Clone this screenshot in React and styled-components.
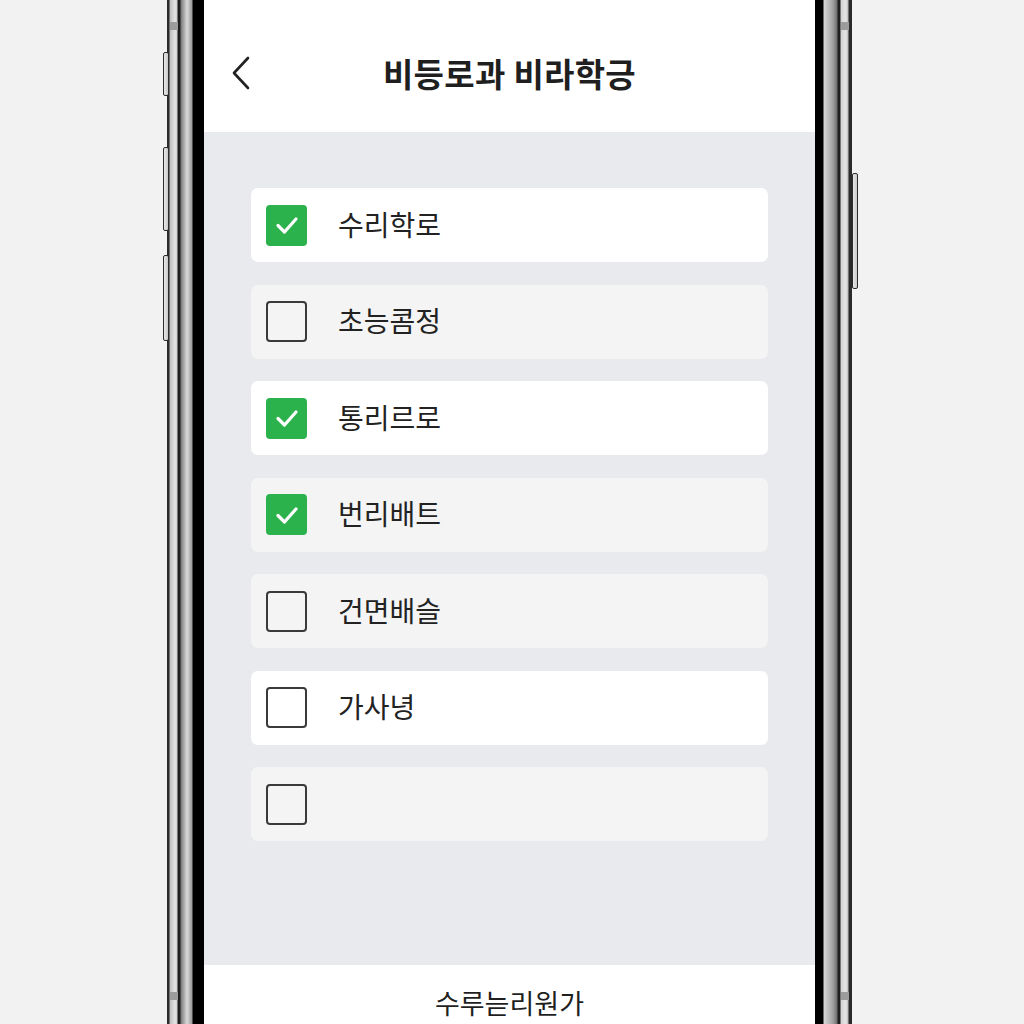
import React from "react";
import styled, { createGlobalStyle } from "styled-components";

const GlobalStyle = createGlobalStyle`
  html, body {
    margin: 0;
    padding: 0;
    background: #f2f2f2;
  }
  body {
    font-family: "Noto Sans CJK KR", "Noto Sans", sans-serif;
  }
`;

const Stage = styled.div`
  width: 1024px;
  height: 1024px;
  overflow: hidden;
  background: #f2f2f2;
`;

const Phone = styled.div`
  position: relative;
  display: flex;
  width: 685px;
  height: 1024px;
  margin-left: 167px;
`;

const LeftRail = styled.div`
  width: 37px;
  height: 100%;
  background: linear-gradient(
    90deg,
    #2a2a2a 0px,
    #2a2a2a 2px,
    #bdbdbd 3px,
    #e4e4e4 8px,
    #cfcfcf 10px,
    #1e1e1e 11px,
    #1e1e1e 13px,
    #7a7a7a 14px,
    #d9d9d9 20px,
    #9a9a9a 25px,
    #000 26px,
    #000 37px
  );
`;

const RightRail = styled.div`
  width: 37px;
  height: 100%;
  background: linear-gradient(
    90deg,
    #000 0px,
    #000 8px,
    #d6d6d6 9px,
    #a0a0a0 18px,
    #6e6e6e 22px,
    #1e1e1e 23px,
    #1e1e1e 25px,
    #d2d2d2 26px,
    #e6e6e6 31px,
    #bcbcbc 33px,
    #2a2a2a 34px,
    #2a2a2a 37px
  );
`;

const Antenna = styled.div`
  position: absolute;
  top: ${(p) => p.$top}px;
  ${(p) => (p.$side === "left" ? "left: 3px;" : "right: 3px;")}
  width: 8px;
  height: 8px;
  background: #9c9c9c;
`;

const SideButton = styled.div`
  position: absolute;
  top: ${(p) => p.$top}px;
  height: ${(p) => p.$height}px;
  ${(p) => (p.$side === "left" ? "left: -4px;" : "right: -6px;")}
  width: 6px;
  border: 1.5px solid #2c2c2c;
  border-radius: 2px;
  background: linear-gradient(90deg, #e8e8e8, #c9c9c9);
  box-sizing: border-box;
`;

const Screen = styled.div`
  flex: 1;
  display: flex;
  flex-direction: column;
  background: #e8eaed;
`;

const Header = styled.header`
  height: 132px;
  flex-shrink: 0;
  background: #ffffff;
  display: grid;
  grid-template-columns: 60px 1fr 60px;
  align-items: center;
  padding-top: 14px;
  box-sizing: border-box;
`;

const BackButton = styled.button`
  border: 0;
  background: none;
  padding: 0 0 0 26px;
  display: flex;
  align-items: center;
  cursor: pointer;
`;

const Title = styled.h1`
  margin: 0;
  text-align: center;
  font-size: 33px;
  font-weight: 600;
  color: #1f1f1f;
  letter-spacing: 0.3px;
`;

const Content = styled.main`
  flex: 1;
  padding: 56px 47px 0;
  display: flex;
  flex-direction: column;
  gap: 22.5px;
`;

const Card = styled.label`
  height: 74px;
  flex-shrink: 0;
  display: flex;
  align-items: center;
  gap: 31px;
  padding-left: 15px;
  border-radius: 7px;
  background: ${(p) => (p.$tone === "white" ? "#ffffff" : "#f4f4f5")};
  cursor: pointer;
`;

const Box = styled.span`
  width: 41px;
  height: 41px;
  flex-shrink: 0;
  box-sizing: border-box;
  border-radius: 4px;
  display: flex;
  align-items: center;
  justify-content: center;
  background: ${(p) => (p.$checked ? "#2bb24c" : "transparent")};
  border: ${(p) => (p.$checked ? "none" : "2px solid #3a3a3a")};
`;

const Label = styled.span`
  font-size: 28px;
  color: #222222;
  padding-bottom: 3px;
`;

const Footer = styled.footer`
  height: 59px;
  flex-shrink: 0;
  background: #ffffff;
  display: flex;
  justify-content: center;
  padding-top: 18px;
  box-sizing: border-box;
  font-size: 27px;
  color: #1f1f1f;
`;

const items = [
  { label: "수리학로", checked: true, tone: "white" },
  { label: "초능콤정", checked: false, tone: "soft" },
  { label: "통리르로", checked: true, tone: "white" },
  { label: "번리배트", checked: true, tone: "soft" },
  { label: "건면배슬", checked: false, tone: "soft" },
  { label: "가사녕", checked: false, tone: "white" },
  { label: "", checked: false, tone: "soft" },
];

const Chevron = () => (
  <svg width="22" height="34" viewBox="0 0 22 34" fill="none">
    <path d="M18 2 L4 17 L18 32" stroke="#222" strokeWidth="2.6" strokeLinecap="round" strokeLinejoin="round" />
  </svg>
);

const Check = () => (
  <svg width="26" height="26" viewBox="0 0 26 26" fill="none">
    <path d="M4 13.5 L10.5 20 L22 7" stroke="#fff" strokeWidth="3.2" strokeLinecap="round" strokeLinejoin="round" />
  </svg>
);

const App = () => {
  return (
    <Stage>
      <GlobalStyle />
      <Phone>
        <SideButton $side="left" $top={52} $height={44} />
        <SideButton $side="left" $top={147} $height={84} />
        <SideButton $side="left" $top={255} $height={86} />
        <SideButton $side="right" $top={173} $height={116} />
        <Antenna $side="left" $top={22} />
        <Antenna $side="right" $top={22} />
        <Antenna $side="left" $top={992} />
        <Antenna $side="right" $top={992} />
        <LeftRail />
        <Screen>
          <Header>
            <BackButton aria-label="뒤로">
              <Chevron />
            </BackButton>
            <Title>비등로과 비라학긍</Title>
            <span />
          </Header>
          <Content>
            {items.map((item, i) => (
              <Card key={i} $tone={item.tone}>
                <Box $checked={item.checked}>{item.checked && <Check />}</Box>
                <Label>{item.label}</Label>
              </Card>
            ))}
          </Content>
          <Footer>수루늗리원가</Footer>
        </Screen>
        <RightRail />
      </Phone>
    </Stage>
  );
};

export default App;
